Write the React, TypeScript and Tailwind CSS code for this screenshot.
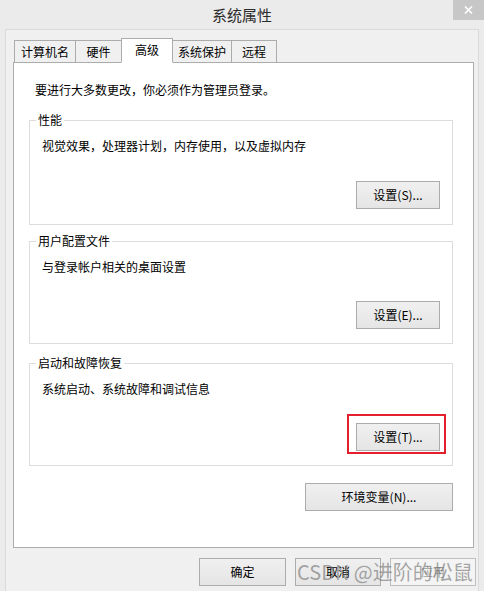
import type { ReactNode } from "react";

type Tab = { label: string; width: string; active?: boolean };

const tabs: Tab[] = [
  { label: "计算机名", width: "w-[62px]" },
  { label: "硬件", width: "w-[47px]" },
  { label: "高级", width: "w-[52px]", active: true },
  { label: "系统保护", width: "w-[60px]" },
  { label: "远程", width: "w-[46px]" },
];

function WinButton({
  children,
  className = "",
  disabled,
}: {
  children: ReactNode;
  className?: string;
  disabled?: boolean;
}) {
  return (
    <button
      type="button"
      className={`flex h-[28px] items-center justify-center border leading-[16px] ${
        disabled
          ? "border-[#bfbfbf] bg-[#f4f4f4] text-[#a0a0a0]"
          : "border-[#acacac] bg-gradient-to-b from-[#f0f0f0] to-[#e5e5e5] text-black"
      } ${className}`}
    >
      {children}
    </button>
  );
}

function GroupBox({
  title,
  text,
  children,
  gap,
  bottom,
  className = "",
}: {
  title: string;
  text: string;
  children: ReactNode;
  gap: string;
  bottom: string;
  className?: string;
}) {
  return (
    <div className={`relative w-[424px] border border-[#dcdcdc] pl-[12px] pr-[12px] pt-[17px] ${bottom} ${className}`}>
      <span className="absolute left-[6px] top-[-9px] bg-white px-[2px] leading-[16px]">{title}</span>
      <p className="leading-[16px]">{text}</p>
      <div className={`flex justify-end ${gap}`}>{children}</div>
    </div>
  );
}

export default function App() {
  return (
    <div className="relative flex h-[591px] w-[484px] flex-col overflow-hidden bg-[#ebebeb] font-['Noto_Sans_CJK_SC','Microsoft_YaHei',sans-serif] text-[12px] text-black">
      {/* title bar */}
      <div className="relative flex h-[29px] shrink-0 items-center justify-center">
        <span className="text-[15px] leading-[20px] text-[#2b2b2b]">系统属性</span>
        <div className="absolute right-0 top-0 flex h-[20px] w-[31px] items-center justify-center bg-[#c7c7c7]">
          <svg width="9" height="8" viewBox="0 0 9 8">
            <path d="M1 0.5 L8 7.5 M8 0.5 L1 7.5" stroke="white" strokeWidth="1.6" />
          </svg>
        </div>
      </div>

      {/* dialog body */}
      <div className="mx-[5px] flex flex-1 flex-col border-x border-t border-[#dadada] bg-[#f0f0f0] pl-[7px] pr-[4px] pt-[8px]">
        {/* tabs */}
        <div className="relative z-10 -mb-px ml-px flex h-[25px] items-end">
          {tabs.map((t, i) =>
            t.active ? (
              <div
                key={t.label}
                className={`relative z-10 flex h-[25px] items-center justify-center border border-b-white border-[#acacac] bg-white pb-[2px] leading-[16px] ${t.width} ${
                  i > 0 ? "-ml-px" : ""
                }`}
              >
                {t.label}
              </div>
            ) : (
              <div
                key={t.label}
                className={`flex h-[23px] items-center justify-center border border-[#acacac] bg-[#f0f0f0] pt-[1px] leading-[16px] ${t.width} ${
                  i > 0 ? "-ml-px" : ""
                }`}
              >
                {t.label}
              </div>
            ),
          )}
        </div>

        {/* tab panel */}
        <div className="flex h-[486px] w-[461px] flex-col border border-[#acacac] bg-white pl-[15px] pt-[19px]">
          <p className="pl-[6px] leading-[16px]">要进行大多数更改，你必须作为管理员登录。</p>

          <GroupBox
            className="mt-[22px]"
            title="性能"
            text="视觉效果，处理器计划，内存使用，以及虚拟内存"
            gap="mt-[27px]"
            bottom="pb-[15px]"
          >
            <WinButton className="w-[84px]">设置(S)...</WinButton>
          </GroupBox>

          <GroupBox
            className="mt-[16px]"
            title="用户配置文件"
            text="与登录帐户相关的桌面设置"
            gap="mt-[26px]"
            bottom="pb-[14px]"
          >
            <WinButton className="w-[84px]">设置(E)...</WinButton>
          </GroupBox>

          <GroupBox
            className="mt-[19px]"
            title="启动和故障恢复"
            text="系统启动、系统故障和调试信息"
            gap="mt-[26px]"
            bottom="pb-[14px]"
          >
            <div className="relative">
              <WinButton className="w-[84px]">设置(T)...</WinButton>
              <span className="pointer-events-none absolute bottom-[-3px] left-[-9px] right-[-6px] top-[-9px] border-2 border-[#e5202e]" />
            </div>
          </GroupBox>

          <div className="mt-[17px] flex w-[424px] justify-end">
            <WinButton className="w-[148px]">环境变量(N)...</WinButton>
          </div>
        </div>

        {/* dialog buttons */}
        <div className="-mr-[2px] mt-[10px] flex justify-end gap-[9px]">
          <WinButton className="w-[87px]">确定</WinButton>
          <WinButton className="w-[86px]">取消</WinButton>
          <WinButton className="w-[86px]" disabled>
            应用
          </WinButton>
        </div>
      </div>

      {/* watermark */}
      <span className="pointer-events-none absolute left-[297px] top-[560px] whitespace-nowrap text-[20px] leading-[24px] text-[#6e6e6e]/60">
        CSDN @进阶的松鼠
      </span>
    </div>
  );
}
